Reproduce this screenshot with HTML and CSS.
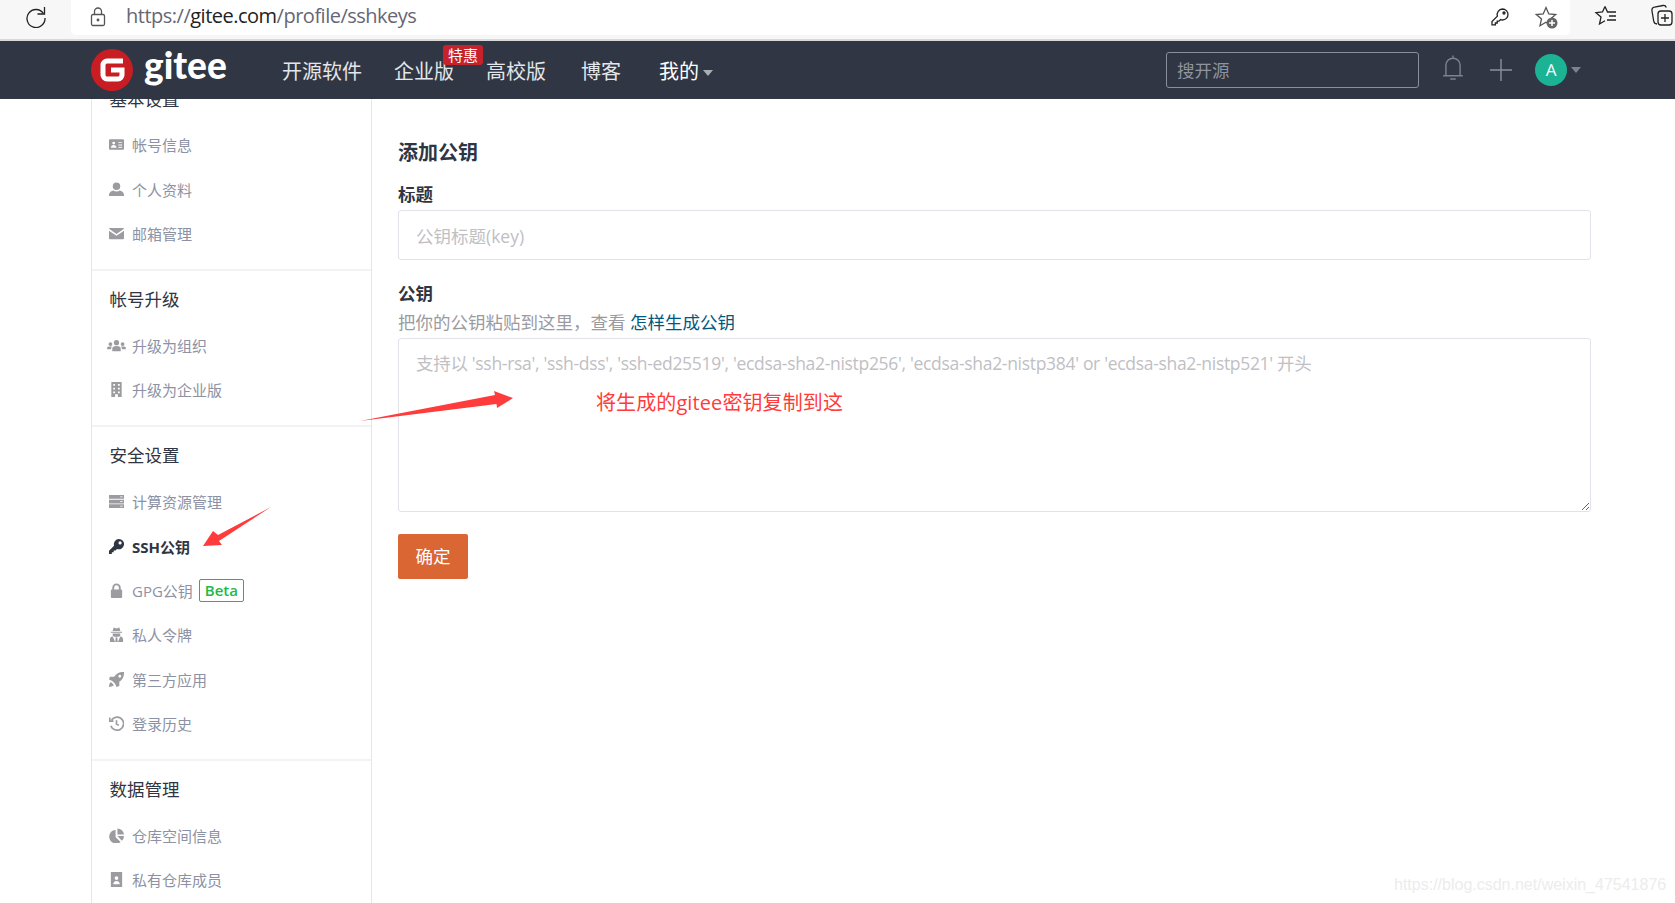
FILE: index.html
```html
<!DOCTYPE html>
<html lang="zh-CN">
<head>
    <meta charset="UTF-8">
    <title>SSH公钥 - Gitee</title>
    <link rel="stylesheet" href="styles.css">
</head>
<body>
    <!-- browser toolbar -->
    <div class="browser-bar">
        <svg class="tool-reload" viewBox="0 0 24 24"><path d="M19.5 9.5A9 9 0 1 0 21 14"/><path d="M20.5 3v7h-7"/></svg>
        <div class="url-pill">
            <svg class="tool-lock" viewBox="0 0 16 20"><rect x="1.5" y="7.5" width="13" height="11" rx="1.5"/><path d="M4.5 7.5V4.5a3.5 3.5 0 0 1 7 0v3"/><circle cx="8" cy="13" r=".8"/></svg>
            <span class="url-text">https://<b>gitee.com</b>/profile/sshkeys</span>
            <svg class="tool-key" viewBox="0 0 20 20"><path d="M12.5 2a5.5 5.5 0 0 1 0 11c-.7 0-1.300-.1-1.900-.4L9 14.200H7.200V16H5.400v1.800H2v-3.300l5.400-5.400A5.500 5.500 0 0 1 12.500 2z"/><circle cx="14" cy="6" r="1"/></svg>
            <svg class="tool-star" viewBox="0 0 24 24"><path d="M12 2.500l2.800 6.400 6.900.6-5.200 4.500 1.500 6.700-6-3.500-6 3.500 1.500-6.700L2.300 9.500l6.900-.6z"/><circle class="badge-dot" cx="18" cy="18" r="5.500"/><path class="badge-plus" d="M18 15v6M15 18h6"/></svg>
        </div>
        <svg class="tool-fav" viewBox="0 0 24 24"><path d="M11 2.500L13.500 8H22M11 2.500L8.500 8 2 8.700l5 4.300-1.500 7 5.500-3.200M15 12h7M13 16h9"/></svg>
        <svg class="tool-coll" viewBox="0 0 24 24"><path d="M7 21c-2 0-3-1-3.300-3L2 8c-.3-2 .7-3.500 2.500-3.800L13 2.500c1.500-.2 2.800.5 3.300 2"/><rect x="8" y="8" width="14" height="14" rx="3"/><path d="M15 11v8M11 15h8"/></svg>
    </div>

    <!-- gitee header -->
    <header class="site-nav">
        <a class="brand">
            <svg class="brand-logo" viewBox="0 0 42 42"><circle cx="21" cy="21" r="21" fill="#c71d23"/><path d="M32 12H16a4 4 0 0 0-4 4v10a4 4 0 0 0 4 4h11a4 4 0 0 0 4-4v-5H20" fill="none" stroke="#fff" stroke-width="5"/></svg>
            <span class="brand-name">gitee</span>
        </a>
        <nav class="nav-links">
            <a>开源软件</a>
            <a class="has-badge">企业版<span class="nav-badge">特惠</span></a>
            <a>高校版</a>
            <a class="nav-blog">博客</a>
            <a class="nav-mine">我的<i class="caret"></i></a>
        </nav>
        <div class="nav-right">
            <input class="nav-search" type="text" placeholder="搜开源">
            <svg class="nav-bell" viewBox="0 0 22 24"><path d="M11 1v3M2 19.500h18M4.500 19.500V10a6.500 6.500 0 0 1 13 0v9.500M8.500 22.500h5"/></svg>
            <svg class="nav-plus" viewBox="0 0 22 22"><path d="M11 0v22M0 11h22"/></svg>
            <span class="avatar">A</span>
            <i class="caret caret-dim"></i>
        </div>
    </header>

    <div class="page">
        <aside class="sidebar">
            <section class="side-group">
                <h4>基本设置</h4>
                <a class="side-row">
                    <svg viewBox="0 0 16 16"><path d="M1 2.500h14a1 1 0 0 1 1 1v9a1 1 0 0 1-1 1H1a1 1 0 0 1-1-1v-9a1 1 0 0 1 1-1zM5 5a1.500 1.500 0 1 0 0 3 1.500 1.500 0 0 0 0-3zM2 11.500h6c0-1.800-1.200-3-3-3s-3 1.200-3 3zM10 5.500v1h4v-1zM10 8v1h4V8zM10 10.500v1h4v-1z" fill-rule="evenodd"/></svg>
                    帐号信息
                </a>
                <a class="side-row">
                    <svg viewBox="0 0 16 16"><circle cx="8" cy="4.500" r="4"/><path d="M0 15v-1.500C0 11 2.500 9.500 4.500 9c1 .7 2.200 1 3.500 1s2.500-.3 3.500-1c2 .5 4.500 2 4.500 4.500V15z"/></svg>
                    个人资料
                </a>
                <a class="side-row">
                    <svg viewBox="0 0 16 16"><path d="M1 2h14a1 1 0 0 1 1 1L8 8.500 0 3a1 1 0 0 1 1-1zM0 5l8 5.500L16 5v8a1 1 0 0 1-1 1H1a1 1 0 0 1-1-1z"/></svg>
                    邮箱管理
                </a>
            </section>
            <section class="side-group">
                <h4>帐号升级</h4>
                <a class="side-row">
                    <svg class="wide" viewBox="0 0 20 16"><circle cx="10" cy="5" r="2.800"/><circle cx="3.500" cy="6.500" r="2"/><circle cx="16.500" cy="6.500" r="2"/><path d="M5.500 14v-2.500C5.500 9.500 7 8.500 10 8.500s4.500 1 4.500 3V14zM0 12v-1.500C0 9.500 1.200 9 3.500 9c.6 0 1.200 0 1.700.2-.8.600-1 1.500-1 2.800zM20 12v-1.500c0-1-1.200-1.500-3.500-1.500-.6 0-1.200 0-1.700.2.800.6 1 1.500 1 2.800z"/></svg>
                    升级为组织
                </a>
                <a class="side-row">
                    <svg viewBox="0 0 16 16"><path d="M2.500 0h11v16H9.500v-3h-3v3H2.500zM4.500 2v2h2V2zM9.500 2v2h2V2zM4.500 6v2h2V6zM9.500 6v2h2V6zM4.500 10v2h2v-2zM9.500 10v2h2v-2z" fill-rule="evenodd"/></svg>
                    升级为企业版
                </a>
            </section>
            <section class="side-group">
                <h4>安全设置</h4>
                <a class="side-row">
                    <svg viewBox="0 0 16 16"><path d="M0 1h16v4H0zM0 6h16v4H0zM0 11h16v4H0z"/><path d="M12 3h2.500M12 8h2.500M12 13h2.500" stroke="#fff" stroke-width=".9"/></svg>
                    计算资源管理
                </a>
                <a class="side-row active">
                    <svg viewBox="0 0 16 16"><path d="M10.500 0a5.500 5.500 0 1 1-2 10.600L7 12.200H5v2H3V16H0v-3.500l5.400-5.400A5.500 5.500 0 0 1 10.500 0zM11.800 2.500a1.700 1.700 0 1 0 0 3.400 1.700 1.700 0 0 0 0-3.400z" fill-rule="evenodd"/></svg>
                    SSH公钥
                </a>
                <a class="side-row">
                    <svg viewBox="0 0 16 16"><path d="M3.500 7V5a4.500 4.500 0 0 1 9 0v2h.500a1 1 0 0 1 1 1v7a1 1 0 0 1-1 1H3a1 1 0 0 1-1-1V8a1 1 0 0 1 1-1zM5.500 7h5V5a2.500 2.500 0 0 0-5 0z" fill-rule="evenodd"/></svg>
                    GPG公钥<span class="beta-tag">Beta</span>
                </a>
                <a class="side-row">
                    <svg viewBox="0 0 16 16"><path d="M5 .5l3 1 3-1 1.200 3.800H3.800zM2 5h12v1H2zM4 6.800h8V9c0 .8-1 1.300-4 1.300S4 9.800 4 9zM1 16v-3c0-1.800 1.400-2.800 3-3l2.500 6zM15 16v-3c0-1.800-1.400-2.800-3-3l-2.500 6zM7.200 10.800h1.600l.5 5.200H6.700z"/></svg>
                    私人令牌
                </a>
                <a class="side-row">
                    <svg viewBox="0 0 16 16"><path d="M16 0c.2 4.500-1.300 8-5 10.500V15l-3 1-1.500-3.500-3-3L0 8l1-3h4.500C8 1.300 11.500-.2 16 0zM11.500 3a1.500 1.500 0 1 0 0 3 1.500 1.500 0 0 0 0-3zM1.500 11c1.200 0 3.500 2.300 3.500 3.500-1 1-3.500 1.500-5 1.500 0-1.500.5-4 1.500-5z" fill-rule="evenodd"/></svg>
                    第三方应用
                </a>
                <a class="side-row">
                    <svg class="line" viewBox="0 0 16 16"><path d="M2.800 4.200A7 7 0 1 1 2 10.500M.8 1.500v4h4M8 4.500V8.500l2.500 1.500"/></svg>
                    登录历史
                </a>
            </section>
            <section class="side-group">
                <h4>数据管理</h4>
                <a class="side-row">
                    <svg viewBox="0 0 16 16"><path d="M7 2v7.500l5.300 5.300A7.300 7.300 0 1 1 7 2zM9 0.500a7 7 0 0 1 7 6.500H9zM9 8.500h7a7 7 0 0 1-2.300 5z"/></svg>
                    仓库空间信息
                </a>
                <a class="side-row">
                    <svg viewBox="0 0 16 16"><path d="M2 0h12v16H2zM8 4.500a2 2 0 1 0 0 4 2 2 0 0 0 0-4zM4.500 13h7c0-2-1.300-3.500-3.500-3.500S4.500 11 4.500 13z" fill-rule="evenodd"/></svg>
                    私有仓库成员
                </a>
            </section>
        </aside>

        <main class="content">
            <h3>添加公钥</h3>
            <label class="field-label">标题</label>
            <input class="field-input" type="text" placeholder="公钥标题(key)">
            <label class="field-label key-label">公钥</label>
            <p class="field-help">把你的公钥粘贴到这里，查看 <a>怎样生成公钥</a></p>
            <textarea class="field-area" placeholder="支持以 'ssh-rsa', 'ssh-dss', 'ssh-ed25519', 'ecdsa-sha2-nistp256', 'ecdsa-sha2-nistp384' or 'ecdsa-sha2-nistp521' 开头"></textarea>
            <button class="btn-submit">确定</button>
        </main>
    </div>

    <!-- screenshot annotations -->
    <svg class="mark-arrows" viewBox="0 0 1675 903">
        <path d="M360 421L495 395 494 391 513 398 497 408 496.500 404z"/>
        <path d="M271 507L218 535 213 531 203 546 222 545 219 541z"/>
    </svg>
    <span class="mark-note">将生成的gitee密钥复制到这</span>
    <span class="watermark">https://blog.csdn.net/weixin_47541876</span>
</body>
</html>
```

FILE: styles.css
```css
* {
    box-sizing: border-box;
}
html, body {
    margin: 0;
    height: 903px;
    overflow: hidden;
}
body {
    position: relative;
    background: #fff;
    color: #2f3542;
    font-family: "Open Sans", "Noto Sans CJK SC", sans-serif;
    font-size: 15px;
}

/* browser toolbar */
.browser-bar {
    display: flex;
    align-items: flex-start;
    height: 41px;
    background: #f7f7f7;
    border-bottom: 2px solid #d9d9d9;
}
.browser-bar svg {
    fill: none;
    stroke: #222;
    stroke-width: 1.3;
}
.tool-reload {
    width: 24px;
    height: 24px;
    margin: 4px 23px 0 24px;
}
.url-pill {
    display: flex;
    align-items: center;
    width: 1499px;
    height: 35px;
    background: #fff;
    border-radius: 0 0 5px 5px;
}
.tool-lock {
    width: 16px;
    height: 20px;
    margin: -2px 20px 0 19px;
}
.browser-bar .tool-lock {
    stroke: #555;
}
.url-text {
    flex: 1;
    margin-top: -4px;
    color: #667;
    font-size: 20px;
    letter-spacing: -0.5px;
}
.url-text b {
    color: #222;
    font-weight: 400;
}
.tool-key {
    width: 20px;
    height: 20px;
    margin: -2px 25px 0 0;
}
.tool-star {
    width: 24px;
    height: 24px;
    margin: -2px 12px 0 -1px;
}
.browser-bar .tool-star {
    stroke: #555;
}
.badge-dot {
    fill: #666;
    stroke: none;
}
.browser-bar .badge-plus {
    stroke: #fff;
    stroke-width: 1.5;
}
.tool-fav {
    width: 24px;
    height: 24px;
    margin: 4px 32px 0 24px;
}
.tool-coll {
    width: 24px;
    height: 24px;
    margin-top: 3px;
}

/* site header */
.site-nav {
    position: relative;
    z-index: 2;
    display: flex;
    align-items: center;
    height: 58px;
    padding-left: 91px;
    background: #303643;
}
.brand {
    display: flex;
    align-items: center;
    width: 191px;
}
.brand-logo {
    width: 42px;
    height: 42px;
}
.brand-name {
    margin: -11px 0 0 11px;
    color: #fff;
    font-family: Lato, sans-serif;
    font-size: 37px;
    font-weight: 900;
    line-height: 42px;
}
.nav-links {
    display: flex;
    gap: 32px;
    font-size: 20px;
    color: #e3e6ea;
}
.has-badge {
    position: relative;
}
.nav-badge {
    position: absolute;
    top: -11px;
    left: 49px;
    width: 40px;
    height: 20px;
    background: #c7212b;
    border-radius: 3px;
    color: #fff;
    font-size: 15px;
    line-height: 20px;
    text-align: center;
}
.nav-blog {
    margin-left: 3px;
}
.nav-mine {
    margin-left: 6px;
    color: #fff;
}
.caret {
    display: inline-block;
    margin-left: 4px;
    border-top: 6px solid #a9adb5;
    border-left: 5.500px solid transparent;
    border-right: 5.500px solid transparent;
    vertical-align: middle;
}
.nav-right {
    display: flex;
    align-items: center;
    margin-left: auto;
    padding-right: 94px;
}
.nav-search {
    width: 253px;
    height: 36px;
    margin-right: 22px;
    padding: 0 10px;
    background: transparent;
    border: 1px solid #8a8f9b;
    border-radius: 3px;
    font: 17.500px "Open Sans", "Noto Sans CJK SC", sans-serif;
}
.nav-search::placeholder {
    color: #8e939e;
}
.nav-bell {
    width: 24px;
    height: 27px;
    margin: -6px 25px 0 0;
    fill: none;
    stroke: #7d8290;
    stroke-width: 1.3;
}
.nav-plus {
    width: 22px;
    height: 22px;
    margin-right: 23px;
    stroke: #8b909c;
    stroke-width: 1.4;
}
.avatar {
    width: 32px;
    height: 32px;
    background: #1bb394;
    border-radius: 50%;
    color: #fff;
    font-size: 17px;
    line-height: 32px;
    text-align: center;
}
.caret-dim {
    margin-left: 4px;
    border-top-color: #7d8290;
}

/* layout under the header */
.page {
    display: flex;
    height: 804px;
}

/* sidebar */
.sidebar {
    width: 281px;
    margin-left: 91px;
    border-left: 1px solid #e5e6ea;
    border-right: 1px solid #e5e6ea;
}
.side-group {
    padding: 13px 0 13.500px 0;
    border-bottom: 2px solid #f3f3f5;
}
.side-group:first-child {
    margin-top: -28.500px;
}
.side-group:last-child {
    border-bottom: 0;
}
.side-group h4 {
    margin: 0 0 9px;
    padding-left: 17.500px;
    color: #2f3542;
    font-size: 17.500px;
    font-weight: 400;
    line-height: 30px;
}
.side-row {
    display: flex;
    align-items: center;
    gap: 8px;
    height: 44.400px;
    padding-left: 17px;
    color: #8c92a4;
    font-size: 15px;
}
.side-row svg {
    flex: none;
    width: 15px;
    height: 15px;
    fill: #9b9ba0;
}
.side-row svg.wide {
    width: 19px;
    margin: 0 -2px 0 -2px;
}
.side-row svg.line {
    fill: none;
    stroke: #9b9ba0;
    stroke-width: 1.800;
}
.side-row.active {
    color: #2f3542;
    font-weight: 700;
}
.side-row.active svg {
    fill: #2f3542;
}
.beta-tag {
    margin-left: -2px;
    padding: 0 5px;
    height: 23px;
    border: 1px solid #2cb34a;
    border-radius: 2px;
    color: #21ba45;
    font-weight: 600;
    font-size: 15px;
    line-height: 21px;
}

/* form */
.content {
    width: 1193px;
    margin-left: 26px;
    padding-top: 41px;
}
.content h3 {
    margin: 0 0 16px;
    font-size: 20px;
    font-weight: 700;
    line-height: 26px;
}
.field-label {
    display: block;
    margin-bottom: 4px;
    font-size: 17.500px;
    font-weight: 700;
    line-height: 24px;
}
.key-label {
    margin: 21px 0 5px;
}
.field-input,
.field-area {
    display: block;
    width: 100%;
    padding: 0 17px;
    border: 1px solid #e1e2ea;
    border-radius: 3px;
    color: #2f3542;
    font: 17.500px "Open Sans", "Noto Sans CJK SC", sans-serif;
}
.field-input {
    height: 50px;
    padding-top: 2px;
}
.field-area {
    height: 174px;
    padding-top: 11px;
}
.field-input::placeholder,
.field-area::placeholder {
    color: #c0c0c4;
}
.field-area::placeholder {
    letter-spacing: -0.31px;
}
.field-help {
    margin: 0 0 4px;
    color: #9b9b9f;
    font-size: 17.500px;
    line-height: 24px;
}
.field-help a {
    color: #005980;
}
.btn-submit {
    display: block;
    width: 70px;
    height: 45px;
    margin-top: 22px;
    padding-bottom: 3px;
    background: #da6633;
    border: 0;
    border-radius: 2px;
    color: #fff;
    font: 17.500px "Open Sans", "Noto Sans CJK SC", sans-serif;
}

/* red marks drawn on top of the screenshot */
.mark-arrows {
    position: absolute;
    top: 0;
    left: 0;
    width: 1675px;
    height: 903px;
    z-index: 3;
    fill: #ff3b3b;
    pointer-events: none;
}
.mark-note {
    position: absolute;
    top: 388px;
    left: 596px;
    z-index: 3;
    color: #ff3b3b;
    font-size: 20px;
    letter-spacing: 0.1px;
    line-height: 30px;
}
.watermark {
    position: absolute;
    top: 874px;
    left: 1394px;
    z-index: 3;
    color: #ececec;
    font-family: "Liberation Sans", sans-serif;
    font-size: 16px;
    line-height: 22px;
    white-space: nowrap;
}
```
